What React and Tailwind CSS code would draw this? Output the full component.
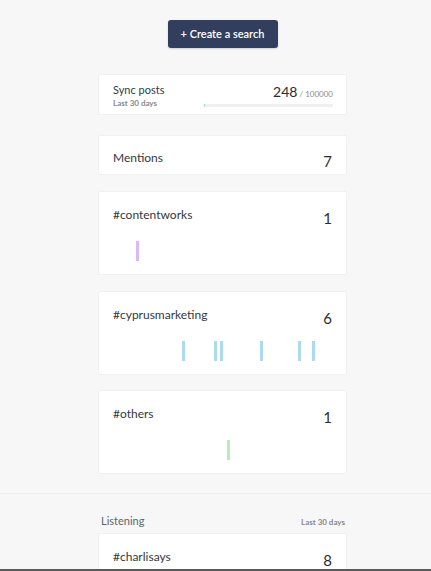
import React from "react";

const tags = [
  { name: "#contentworks", count: 1, color: "#dcb8f6", bars: [23] },
  { name: "#cyprusmarketing", count: 6, color: "#acdaf3", bars: [69, 101, 107, 147, 185, 199] },
  { name: "#others", count: 1, color: "#b8ebba", bars: [114] },
];

function TagCard({ t, mt }) {
  return (
    <div className={`bg-white border border-[#f0f0f0] rounded-[2px] h-[84px] px-[14px] ${mt}`}>
      <div className="flex justify-between items-start pt-[14px]">
        <span className="text-[12px] leading-[18px] text-[#333842]">{t.name}</span>
        <span className="text-[15px] leading-[18px] text-[#2d2d2d] mt-[3px]">{t.count}</span>
      </div>
      <div className="relative h-[20px] mt-[14px]">
        {t.bars.map((x, i) => (
          <div
            key={i}
            className="absolute top-0 w-[3px] h-[20px]"
            style={{ left: x, backgroundColor: t.color }}
          />
        ))}
      </div>
    </div>
  );
}

export default function App() {
  return (
    <div
      className="min-h-[571px] bg-[#f7f7f7] text-[#333]"
      style={{ fontFamily: "Lato, 'Noto Sans', sans-serif" }}
    >
      <div className="pl-[98px] w-[347px] pt-[20px]">
        <div className="flex justify-center">
          <button className="w-[110px] h-[28px] rounded-[3px] bg-[#323e5d] text-white text-[11px] font-semibold shadow-[0_1px_2px_rgba(0,0,0,0.15)]">
            + Create a search
          </button>
        </div>

        <div className="mt-[26px] bg-white border border-[#f0f0f0] rounded-[2px] h-[41px] pl-[14px] pr-[13px] flex justify-between">
          <div className="pt-[8px]">
            <div className="text-[11px] leading-[14px] text-[#333842]">Sync posts</div>
            <div className="text-[8px] leading-[12px] font-bold text-[#8a8a8a]">Last 30 days</div>
          </div>
          <div className="pt-[8px] flex flex-col items-end">
            <div className="leading-[18px] flex items-baseline">
              <span className="text-[14px] text-[#2d2d2d]">248</span>
              <span className="text-[8px] text-[#8a8a8a] ml-[2px]">/ 100000</span>
            </div>
            <div className="w-[129px] h-[3px] bg-[#f0f0f0] mt-[1px] relative">
              <div className="absolute left-0 top-0 h-[3px] w-[1px] bg-[#a8e0a8]" />
            </div>
          </div>
        </div>

        <div className="mt-[20px] bg-white border border-[#f0f0f0] rounded-[2px] h-[40px] px-[14px] flex justify-between items-start">
          <span className="text-[12px] leading-[18px] text-[#333842] mt-[13px]">Mentions</span>
          <span className="text-[15px] leading-[18px] text-[#2d2d2d] mt-[16px]">7</span>
        </div>

        <TagCard t={tags[0]} mt="mt-[16px]" />
        <TagCard t={tags[1]} mt="mt-[16px]" />
        <TagCard t={tags[2]} mt="mt-[15px]" />
      </div>

      <div className="mt-[19px] border-t border-[#eeeeee] bg-[#f7f7f7]">
        <div className="pl-[98px] w-[347px]">
          <div className="flex justify-between items-center pl-[3px] pr-[2px] pt-[15px] h-[39px]">
            <span className="text-[11px] text-[#5f6672]">Listening</span>
            <span className="text-[8px] font-bold text-[#8a8a8a] mt-[2px]">Last 30 days</span>
          </div>
          <div className="bg-white border border-[#f0f0f0] rounded-[2px] h-[60px] px-[14px] flex justify-between items-start">
            <span className="text-[12px] leading-[18px] text-[#333842] mt-[14px]">#charlisays</span>
            <span className="text-[15px] leading-[18px] text-[#2d2d2d] mt-[17px]">8</span>
          </div>
        </div>
      </div>

      <div className="fixed left-0 right-0 bottom-0 h-[2px] bg-[#5a5a5a]" />
    </div>
  );
}
